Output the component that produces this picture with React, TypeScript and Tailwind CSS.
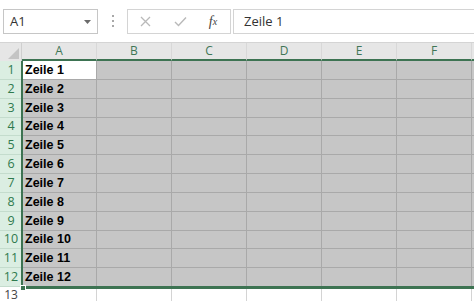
const cols = ["A", "B", "C", "D", "E", "F"];
const rowHeights = [19, 19, 19, 18, 19, 19, 19, 19, 19, 18, 19, 19];

function CornerCell() {
  return (
    <div className="relative w-[22px] shrink-0 bg-[#e6e6e6] border-r border-[#cfcfcf]">
      <svg className="absolute right-[2px] bottom-[2px]" width="11" height="11" viewBox="0 0 11 11">
        <polygon points="11,0 11,11 0,11" fill="#c4c4c4" />
      </svg>
    </div>
  );
}

function FormulaBar() {
  return (
    <div className="flex h-[42px] items-start bg-white pt-[9px] font-['Open_Sans',sans-serif]">
      <div className="ml-[3px] flex h-[25px] w-[95px] items-center justify-between border border-[#c6c6c6] pl-[6px] pr-[6px]">
        <span className="text-[13px] text-[#333]">A1</span>
        <svg width="7" height="4" viewBox="0 0 7 4">
          <polygon points="0,0 7,0 3.5,4" fill="#6b6b6b" />
        </svg>
      </div>
      <div className="flex w-[29px] flex-col items-center gap-[3px] pt-[6px]">
        <span className="h-[2px] w-[2px] bg-[#a8a8a8]" />
        <span className="h-[2px] w-[2px] bg-[#a8a8a8]" />
        <span className="h-[2px] w-[2px] bg-[#a8a8a8]" />
      </div>
      <div className="flex h-[25px] w-[104px] items-center border border-[#d4d4d4]">
        <div className="flex w-[34px] justify-center">
          <svg width="11" height="11" viewBox="0 0 11 11">
            <path d="M1 1L10 10M10 1L1 10" stroke="#b9b9b9" strokeWidth="1.3" />
          </svg>
        </div>
        <div className="flex w-[36px] justify-center">
          <svg width="13" height="11" viewBox="0 0 13 11">
            <path d="M1 6L4.5 9.5L12 1.5" stroke="#b9b9b9" strokeWidth="1.4" fill="none" />
          </svg>
        </div>
        <div className="flex w-[30px] justify-center font-['Liberation_Serif',serif] text-[14px] italic text-[#444]">
          f<span className="text-[10px] mt-[3px]">x</span>
        </div>
      </div>
      <div className="ml-[2px] flex h-[25px] flex-1 items-center border border-r-0 border-[#d4d4d4] pl-[10px]">
        <span className="text-[13px] text-[#333]">Zeile 1</span>
      </div>
    </div>
  );
}

function HeaderRow() {
  return (
    <div className="flex h-[19px] border-t border-[#d4d4d4]">
      <CornerCell />
      {cols.map((c) => (
        <div
          key={c}
          className="flex w-[75px] shrink-0 items-center justify-center border-r border-b-2 border-r-[#d8d8d8] border-b-[#3d7352] bg-[#e6e6e6] text-[12px] text-[#3f7656] font-['Open_Sans',sans-serif]"
        >
          {c}
        </div>
      ))}
      <div className="flex-1 border-b-2 border-[#3d7352] bg-[#e6e6e6]" />
    </div>
  );
}

function DataRow({ n, h }: { n: number; h: number }) {
  return (
    <div className="flex" style={{ height: h }}>
      <div className="flex w-[22px] shrink-0 items-center justify-center border-b border-[#c4dccd] bg-[#dbeee2] text-[12.5px] text-[#2f7a4e] font-['Open_Sans',sans-serif]">
        {n}
      </div>
      {cols.map((c) => {
        const active = n === 1 && c === "A";
        return (
          <div
            key={c}
            className={
              "flex w-[75px] shrink-0 items-center border-r border-b border-[#a9a9a9] pl-[3px] " +
              (active ? "bg-white" : "bg-[#c6c6c6]")
            }
          >
            {c === "A" && (
              <span className="text-[12.5px] font-bold text-black font-['Liberation_Sans',sans-serif]">
                Zeile {n}
              </span>
            )}
          </div>
        );
      })}
      <div className="flex-1 border-b border-[#a9a9a9] bg-[#c6c6c6]" />
    </div>
  );
}

function EmptyRow() {
  return (
    <div className="flex h-[14px] bg-white">
      <div className="flex w-[22px] shrink-0 items-start justify-center pt-[1px] text-[12px] leading-[13px] text-[#444] font-['Open_Sans',sans-serif]">
        13
      </div>
      {cols.map((c) => (
        <div key={c} className="w-[75px] shrink-0 border-r border-[#d4d4d4]" />
      ))}
    </div>
  );
}

export default function App() {
  return (
    <div className="h-[302px] w-[474px] overflow-hidden bg-white">
      <FormulaBar />
      <HeaderRow />
      <div className="relative">
        {rowHeights.map((h, i) => (
          <DataRow key={i} n={i + 1} h={h} />
        ))}
        <EmptyRow />
        {/* selection outline */}
        <div className="pointer-events-none absolute left-[21px] top-0 h-[228px] w-[2px] bg-[#3d7352]" />
        <div className="pointer-events-none absolute left-[21px] right-0 top-[225px] h-[3px] bg-[#3d7352]" />
        <div className="pointer-events-none absolute left-[20px] top-[224px] h-[6px] w-[6px] border border-white bg-[#3d7352]" />
      </div>
    </div>
  );
}
